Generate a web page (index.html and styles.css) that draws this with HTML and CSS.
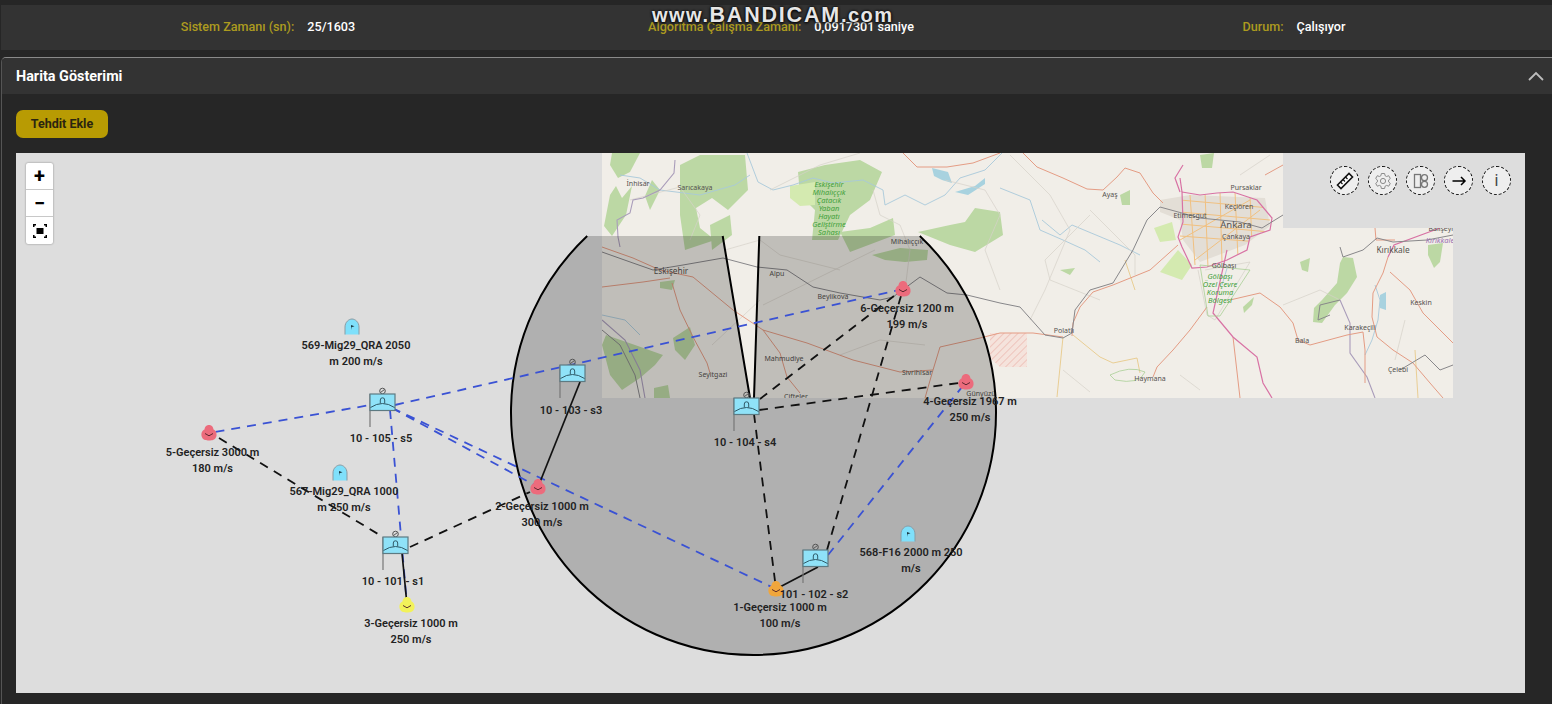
FILE: index.html
```html
<!DOCTYPE html>
<html lang="tr">
<head>
<meta charset="utf-8">
<title>Harita Gösterimi</title>
<link rel="stylesheet" href="styles.css">
</head>
<body>
<div class="watermark"><span class="wm-small">www.</span><span class="wm-big">BANDICAM</span><span class="wm-small">.com</span></div>
<header class="statusbar">
  <div class="stat"><span class="stat-key">Sistem Zamanı (sn):</span><span class="stat-val">25/1603</span></div>
  <div class="stat"><span class="stat-key">Algoritma Çalışma Zamanı:</span><span class="stat-val">0,0917301 saniye</span></div>
  <div class="stat"><span class="stat-key">Durum:</span><span class="stat-val">Çalışıyor</span></div>
</header>
<section class="panel">
  <div class="panel-head">
    <h2 class="panel-title">Harita Gösterimi</h2>
    <svg class="chevron" viewBox="0 0 16 10"><path d="M1 9 L8 2 L15 9"/></svg>
  </div>
  <div class="panel-body">
    <button class="add-btn">Tehdit Ekle</button>
    <div class="map">
      <svg class="canvas" viewBox="16 153 1509 540" xmlns="http://www.w3.org/2000/svg">
        <defs>
          <clipPath id="tiles"><path d="M602 153H1283V228H1453V398H602Z"/></clipPath>
          <clipPath id="ring"><path d="M1182 192L1200 195L1217 193L1233 192L1257 200L1272 218L1270 230L1250 237L1247 250L1227 260L1207 267L1192 268L1182 247L1178 237L1183 222Z"/></clipPath>
          <pattern id="hatch" width="5" height="5" patternUnits="userSpaceOnUse" patternTransform="rotate(-45)">
            <rect width="5" height="5" fill="#f5e3dc"/><rect width="5" height="1" fill="#eec4bc"/>
          </pattern>
          <symbol id="sensor" viewBox="-2 -8 29 43" width="29" height="43" overflow="visible">
            <circle class="s-knob" cx="12.500" cy="-3" r="2.800"/>
            <path class="s-knob" d="M10.500 -1.500 L14.500 -4.500"/>
            <path class="s-pole" d="M0 0V33"/>
            <rect class="s-body" x="0" y="0" width="25" height="16.500"/>
            <path class="s-line" d="M0.500 13.500Q12.500 5.500 24.500 13.500"/>
            <path class="s-line" d="M10.300 9.500V6a2.200 2.200 0 0 1 4.400 0V9.500"/>
          </symbol>
          <symbol id="threat" viewBox="-9 -9 18 18" width="18" height="18" overflow="visible">
            <path d="M-7.500 3C-8 -1 -6 -3 -4.500 -3.500C-4 -7 -2 -8 0 -8C2 -8 4 -7 4.500 -3.500C6 -3 8 -1 7.500 3C6.500 7 3 7.500 0 7.500C-3 7.500 -6.500 7 -7.500 3Z"/>
            <path class="t-mark" d="M-4 0.500L0 2.800L4 0.500"/>
          </symbol>
          <symbol id="qra" viewBox="-9 -9 18 18" width="18" height="18" overflow="visible">
            <path class="q-fill" d="M-7 7.500V0C-7 -5 -3 -8 0 -8C3 -8 7 -5 7 0V7.500Z"/>
            <path class="q-edge" d="M-7 7.500V0C-7 -5 -3 -8 0 -8C3 -8 7 -5 7 0V7.500"/>
            <path class="q-flag" d="M-1 3V-2L2.500 -0.800L-0.500 0.200"/>
          </symbol>
        </defs>

        <g clip-path="url(#tiles)">
          <rect class="tile" x="602" y="153" width="851" height="245"/>
          <g class="forest">
            <path d="M604 226L610 195L616 186L622 198L632 186L626 215L612 236Z"/>
            <path d="M612 153L640 153L630 172L618 178L610 165Z"/>
            <path d="M645 196L652 180L660 190L650 210Z"/>
            <path d="M680 165L700 155L745 155L748 190L728 210L712 198L696 208L700 228L715 240L685 250L680 215Z"/>
            <path d="M710 225L730 215L732 235L712 250Z"/>
            <path d="M798 172L825 165L860 160L882 172L870 200L850 215L838 240L812 240L815 210L800 195Z"/>
            <path d="M840 232L870 228L893 218L895 235L850 252Z"/>
            <path d="M918 232L950 225L965 222L975 208L1000 212L1003 235L975 252L950 245Z"/>
            <path d="M872 255L900 248L928 250L927 260L905 262L885 260Z"/>
            <path d="M606 335L635 345L663 355L655 365L640 378L622 390L610 375L602 345Z"/>
            <path d="M673 338L690 327L695 345L685 360L675 350Z"/>
            <path d="M654 388L668 385L670 398L654 398Z"/>
            <path d="M660 282L675 280L672 290L660 288Z"/>
            <path d="M1343 257L1353 258L1357 277L1347 293L1335 305L1322 323L1313 322L1314 308L1322 300L1337 283L1340 263Z"/>
            <path d="M1243 307L1254 297L1252 305L1244 313Z"/>
            <path d="M1200 155L1214 153L1212 168L1202 168Z"/>
            <path d="M1300 262L1310 258L1308 272L1302 270Z"/>
            <path d="M1428 245L1443 243L1440 262L1434 268L1428 255Z"/>
            <path d="M1120 195L1130 190L1130 205L1122 205Z"/>
            <path d="M1060 270L1075 268L1070 275Z"/>
          </g>
          <path class="forest-light" d="M790 186L815 182L815 205L800 206L790 198Z"/>
          <path class="forest-light" d="M1160 272L1178 250L1192 265L1182 280Z"/>
          <path class="forest-light" d="M1154 228L1172 222L1176 240L1160 242Z"/>
          <path class="urban" d="M1160 200L1190 195L1265 198L1270 226L1245 245L1200 262L1183 240L1180 220L1160 212Z"/>
          <path class="hatch" d="M990 333H1027L1027 367H1000L990 358Z"/>
          <g class="city" clip-path="url(#ring)">
            <path d="M1180 200L1270 208M1180 212L1270 220M1180 224L1270 232M1180 236L1260 242M1190 195L1195 265M1205 192L1208 268M1220 192L1222 262M1235 192L1238 258M1250 195L1252 245M1180 240L1250 200M1195 260L1260 210"/>
          </g>
          <g class="river">
            <path d="M747 153L758 182L773 190L793 185L813 178L833 183L863 180L883 190L885 205L905 195L925 205L945 195L960 178L985 170L1002 153"/>
            <path d="M620 175L640 178L660 190L700 195L735 185L750 175"/>
            <path d="M1000 188L1030 200L1040 230L1063 240L1085 250L1100 262"/>
            <path d="M602 315L625 320L640 335"/>
            <path d="M1042 220L1060 235L1072 225L1120 245L1140 255"/>
            <path d="M1375 285L1380 300L1378 320L1372 340L1365 355"/>
            <path d="M1228 265L1222 285"/>
          </g>
          <path class="lake" d="M932 168L948 172L952 183L942 180L934 176Z"/>
          <path class="lake" d="M955 192L975 186L985 178L985 184L968 195Z"/>
          <path class="lake" d="M1380 295L1386 292L1386 310L1380 308Z"/>
          <g class="minor">
            <path d="M630 200L680 187L700 215L690 240"/>
            <path d="M770 190L820 165L860 153"/>
            <path d="M873 190L880 215L900 225L910 250L905 290"/>
            <path d="M945 180L985 190L1000 215L985 250L1000 290"/>
            <path d="M763 305L830 272L875 250"/>
            <path d="M725 250L760 240L780 255L840 270"/>
            <path d="M1010 155L1050 195L1070 230L1045 290L1030 320"/>
            <path d="M1090 210L1135 255L1135 275"/>
            <path d="M1100 300L1050 280L1045 260L1090 215"/>
            <path d="M1270 155L1240 175"/>
            <path d="M1205 270L1250 262L1215 320L1207 315L1198 270"/>
            <path d="M1283 305L1320 290L1340 300"/>
            <path d="M1405 320L1395 360"/>
            <path d="M1180 375L1200 390M1063 370L1090 392"/>
            <path d="M840 355L880 340L925 345"/>
            <path d="M712 345L760 300"/>
          </g>
          <g class="boundary">
            <path d="M675 160L674 173L660 190L643 198L633 200L630 213L617 220L618 237L620 247"/>
            <path d="M1340 300L1350 323L1350 353L1367 377L1375 398"/>
            <path d="M602 320L625 340L640 370L645 398"/>
          </g>
          <g class="yellow-road">
            <path d="M1063 337L1060 367L1057 397"/>
            <path d="M1073 335L1100 357L1113 363L1137 358L1140 373"/>
            <path d="M1125 260L1135 290"/>
            <path d="M1415 350L1418 398"/>
          </g>
          <g class="red-road">
            <path d="M903 153L917 167L947 167L973 163L1000 153"/>
            <path d="M1023 153L1037 167L1063 178L1087 189L1103 190L1117 177L1125 168L1140 173L1153 193L1163 203"/>
            <path d="M602 247L633 258L660 270L693 277L733 310L763 330L807 343L853 360L900 372L933 370"/>
            <path d="M933 370L940 347L980 338L1000 333L1033 333L1063 337"/>
            <path d="M672 283L680 310L693 337L707 363L710 373"/>
            <path d="M602 287L643 282L670 278"/>
            <path d="M763 330L780 353L787 377L800 393"/>
            <path d="M925 398L933 370"/>
            <path d="M1178 245L1150 270L1113 285L1093 292L1080 307L1073 323L1072 336"/>
            <path d="M1207 307L1190 330L1173 350L1157 367L1153 377"/>
            <path d="M1230 300L1260 293L1280 307L1293 323L1298 340L1310 345L1347 335L1363 332L1365 350L1365 383"/>
            <path d="M1388 257L1383 273L1373 293L1372 317L1377 337L1393 350L1413 363L1430 383L1443 398"/>
            <path d="M1390 272L1410 290L1423 313L1453 343"/>
            <path d="M1233 337L1240 398"/>
            <path d="M1265 175L1283 165"/>
            <path d="M1375 228L1376 240L1395 240"/>
          </g>
          <g class="motorway">
            <path d="M1182 192L1200 195L1217 193L1233 192L1257 200L1272 218L1270 230L1250 237L1247 250L1227 260L1207 267L1192 268L1182 247L1178 237L1183 222Z"/>
            <path d="M1180 178L1182 192M1183 165L1175 178L1180 192"/>
            <path d="M1227 250L1213 313L1233 337L1257 357L1263 383L1272 398"/>
            <path d="M1388 257L1394 245L1440 228"/>
          </g>
          <g class="rail">
            <path d="M602 252L633 263L653 270L683 265L723 258L757 267L787 270L813 287L840 293L880 300L893 297L920 277L947 293L967 295L1000 303L1020 307"/>
            <path d="M1160 207L1147 220L1133 250L1113 283L1090 290L1075 310L1072 333L1063 338L1045 335L1020 307"/>
            <path d="M1160 207L1200 218L1240 222L1262 228L1283 215"/>
            <path d="M1340 247L1343 257L1363 250L1377 238L1393 242L1427 240L1453 235"/>
            <path d="M602 330L620 345L635 375L640 398"/>
            <path d="M1400 370L1425 355L1440 370L1453 365"/>
            <path d="M1340 300L1320 305L1318 320L1330 315"/>
          </g>
          <path class="reserve" d="M1200 265L1250 270L1220 316L1208 316Z"/>
          <path class="reserve" d="M1110 375Q1130 365 1145 372Q1140 385 1115 380Z"/>

          <g class="place">
            <text x="638" y="186">İnhisar</text>
            <text x="695" y="190">Sarıcakaya</text>
            <text x="907" y="244">Mihalıççık</text>
            <text x="671" y="274" class="place-md">Eskişehir</text>
            <text x="777" y="276">Alpu</text>
            <text x="833" y="299">Beylikova</text>
            <text x="784" y="361">Mahmudiye</text>
            <text x="713" y="377">Seyitgazi</text>
            <text x="917" y="375">Sivrihisar</text>
            <text x="796" y="399">Çifteler</text>
            <text x="981" y="396">Günyüzü</text>
            <text x="1110" y="197">Ayaş</text>
            <text x="1246" y="190">Pursaklar</text>
            <text x="1239" y="209">Keçiören</text>
            <text x="1190" y="218">Etimesgut</text>
            <text x="1236" y="228" class="place-lg">Ankara</text>
            <text x="1236" y="239">Çankaya</text>
            <text x="1224" y="268">Gölbaşı</text>
            <text x="1393" y="253" class="place-md">Kırıkkale</text>
            <text x="1442" y="231">Balışeyh</text>
            <text x="1421" y="305">Keskin</text>
            <text x="1360" y="330">Karakeçili</text>
            <text x="1302" y="343">Bala</text>
            <text x="1398" y="372">Çelebi</text>
            <text x="1064" y="333">Polatlı</text>
            <text x="1150" y="381">Haymana</text>
          </g>
          <g class="place-park">
            <text x="829" y="187">Eskişehir</text>
            <text x="829" y="195">Mihalıççık</text>
            <text x="829" y="203">Çatacık</text>
            <text x="829" y="211">Yaban</text>
            <text x="829" y="219">Hayatı</text>
            <text x="829" y="227">Geliştirme</text>
            <text x="829" y="235">Sahası</text>
            <text x="1220" y="279">Gölbaşı</text>
            <text x="1220" y="287">Özel Çevre</text>
            <text x="1220" y="295">Koruma</text>
            <text x="1220" y="303">Bölgesi</text>
          </g>
          <text class="place-purple" x="1440" y="243">Kırıkkale</text>
        </g>

        <path class="cover" d="M753 413L722.700 236H587.200A242.500 242.500 0 1 0 919.800 236H759.300Z"/>
        <path class="cover-edge" d="M587.200 236A242.500 242.500 0 1 0 919.800 236"/>
        <path class="cover-edge" d="M722.700 236L750 398M759.300 236L754 398"/>

        <g class="link-blue">
          <path d="M382 403L209 433"/>
          <path d="M395 405L903 289"/>
          <path d="M392 408L776 589"/>
          <path d="M392 408L538 487"/>
          <path d="M390 410L407 605"/>
          <path d="M828 555L966 382"/>
        </g>
        <g class="link-black">
          <path d="M219 438L383 537"/>
          <path d="M410 547L530 492"/>
          <path d="M760 399L903 289"/>
          <path d="M759 410L966 382"/>
          <path d="M754 414L776 589"/>
          <path d="M827 550L903 289"/>
        </g>
        <g class="link-solid">
          <path d="M580 382L538 487"/>
          <path d="M818 567L776 589"/>
          <path d="M402 553L407 605"/>
        </g>

        <use href="#sensor" x="368" y="386"/>
        <use href="#sensor" x="381" y="529"/>
        <use href="#sensor" x="558" y="357"/>
        <use href="#sensor" x="732" y="390"/>
        <use href="#sensor" x="801" y="542"/>

        <use href="#threat" class="t-red" x="200" y="424"/>
        <use href="#threat" class="t-red" x="529" y="478"/>
        <use href="#threat" class="t-red" x="894" y="280"/>
        <use href="#threat" class="t-red" x="957" y="373"/>
        <use href="#threat" class="t-orange" x="767" y="580"/>
        <use href="#threat" class="t-yellow" x="398" y="596"/>

        <use href="#qra" x="343" y="318"/>
        <use href="#qra" x="331" y="464"/>
        <use href="#qra" x="899" y="525"/>

        <g class="label">
          <text x="356" y="349">569-Mig29_QRA 2050</text>
          <text x="356" y="365">m 200 m/s</text>
          <text x="381" y="442">10 - 105 - s5</text>
          <text x="212.500" y="456">5-Geçersiz 3000 m</text>
          <text x="212.500" y="472">180 m/s</text>
          <text x="344" y="495">567-Mig29_QRA 1000</text>
          <text x="344" y="511">m 250 m/s</text>
          <text x="393" y="585">10 - 101 - s1</text>
          <text x="411" y="627">3-Geçersiz 1000 m</text>
          <text x="411" y="643">250 m/s</text>
          <text x="542" y="510">2-Geçersiz 1000 m</text>
          <text x="542" y="526">300 m/s</text>
          <text x="571" y="414">10 - 103 - s3</text>
          <text x="745" y="446">10 - 104 - s4</text>
          <text x="907" y="312">6-Geçersiz 1200 m</text>
          <text x="907" y="328">199 m/s</text>
          <text x="970" y="405">4-Geçersiz 1967 m</text>
          <text x="970" y="421">250 m/s</text>
          <text x="911" y="556">568-F16 2000 m 250</text>
          <text x="911" y="572">m/s</text>
          <text x="814" y="598">101 - 102 - s2</text>
          <text x="780" y="611">1-Geçersiz 1000 m</text>
          <text x="780" y="627">100 m/s</text>
        </g>
      </svg>

      <div class="zoom-ctl">
        <button class="zoom-btn">+</button>
        <button class="zoom-btn">−</button>
        <button class="zoom-btn">
          <svg class="fit-icon" viewBox="0 0 14 14"><rect x="3.500" y="4" width="7" height="6"/><path d="M0 0h3v1.500h-1.500v1.500h-1.500zM14 0h-3v1.500h1.500v1.500h1.500zM0 14h3v-1.500h-1.500v-1.500h-1.500zM14 14h-3v-1.500h1.500v-1.500h1.500z"/></svg>
        </button>
      </div>

      <div class="tools">
        <div class="tool"><svg class="tool-icon" viewBox="0 0 20 20"><path class="ic-dark" d="M2.500 14L14 2.500L17.500 6L6 17.500Z"/><path class="ic-thin" d="M5.500 11l2 2M8 8.500l2 2M10.500 6l2 2"/></svg></div>
        <div class="tool"><svg class="tool-icon" viewBox="0 0 20 20"><path class="ic-grey" d="M8.400 2.500h3.200l.5 2.200 1.500.8 2.100-.8 1.600 2.800-1.700 1.500v1.900l1.700 1.500-1.600 2.800-2.100-.8-1.500.8-.5 2.300H8.400l-.5-2.300-1.500-.8-2.100.8-1.600-2.800 1.700-1.500V9L2.700 7.500l1.600-2.800 2.100.8 1.500-.8z"/><circle class="ic-grey" cx="10" cy="10" r="2.600"/></svg></div>
        <div class="tool"><svg class="tool-icon" viewBox="0 0 20 20"><rect class="ic-grey2" x="3.500" y="3.500" width="6" height="13"/><circle class="ic-grey2" cx="13.500" cy="6.700" r="3"/><circle class="ic-grey2" cx="13.500" cy="13.300" r="3"/></svg></div>
        <div class="tool"><svg class="tool-icon" viewBox="0 0 20 20"><path class="ic-arrow" d="M3.500 10H16M12 6L16 10L12 14"/></svg></div>
        <div class="tool tool-i">i</div>
      </div>
    </div>
  </div>
</section>
</body>
</html>
```

FILE: styles.css
```css
* { box-sizing: border-box; }
html, body { margin: 0; height: 704px; overflow: hidden; }
body {
  background: #262626;
  padding-top: 5px;
  font-family: Roboto, "Liberation Sans", sans-serif;
  color: #fff;
  position: relative;
}
.watermark {
  position: absolute;
  left: 652px;
  top: 3px;
  height: 24px;
  display: flex;
  align-items: baseline;
  font-family: "Liberation Sans", sans-serif;
  font-weight: 700;
  color: #e6e6e6;
  text-shadow: 0 1px 3px #000, 0 0 3px #000;
  white-space: nowrap;
  z-index: 5;
}
.wm-big { font-size: 21.500px; letter-spacing: 1.800px; }
.wm-small { font-size: 20px; letter-spacing: 1.500px; font-weight: 700; }

.statusbar {
  height: 45px;
  margin: 0 0 7px 1px;
  padding: 0 0 2px 10.500px;
  background: #333;
  display: grid;
  grid-template-columns: repeat(3, 513px);
  align-items: center;
  font-size: 12.600px;
  font-weight: 500;
}
.stat { display: flex; justify-content: center; gap: 13px; }
.stat-key { color: #ad9b1f; }
.stat-val { color: #fff; }

.panel {
  margin-left: 1px;
  height: 647px;
  border-top: 1px solid #8a8a8a;
  border-left: 1px solid #555;
  border-top-left-radius: 5px;
}
.panel-head {
  height: 36px;
  background: #333;
  padding: 0 8px 0 14px;
  display: flex;
  align-items: center;
  justify-content: space-between;
  border-top-left-radius: 4px;
}
.panel-title { margin: 0; font-size: 14.400px; font-weight: 700; color: #fff; }
.chevron { width: 16px; height: 10px; fill: none; stroke: #bdbdbd; stroke-width: 1.800; }
.panel-body { padding: 16px 27px 0 14px; }
.add-btn {
  display: block;
  width: 92px;
  height: 28px;
  padding: 0 0 1px;
  border: 0;
  border-radius: 7px;
  background: #b89b03;
  color: #2b2510;
  font: 700 12.500px Roboto, "Liberation Sans", sans-serif;
}
.map {
  position: relative;
  margin-top: 15px;
  height: 540px;
  background: #dddddd;
  overflow: hidden;
}
.canvas { display: block; width: 100%; height: 100%; }

.tile { fill: #f1eee8; }
.forest path { fill: #bcd8a4; }
.forest-light { fill: #d4eab0; }
.urban { fill: #e3ded6; }
.hatch { fill: url(#hatch); }
.city path { fill: none; stroke: #f0c080; stroke-width: 1; }
.river path { fill: none; stroke: #a8c8da; stroke-width: 0.900; }
.lake { fill: #a8d2df; }
.minor path { fill: none; stroke: #d6d1c8; stroke-width: 0.700; }
.boundary path { fill: none; stroke: #a99cba; stroke-width: 1.100; }
.yellow-road path { fill: none; stroke: #e8c98a; stroke-width: 0.900; }
.red-road path { fill: none; stroke: #e49c84; stroke-width: 1; }
.motorway path { fill: none; stroke: #d872a4; stroke-width: 1.200; }
.rail path { fill: none; stroke: #88878a; stroke-width: 1; }
.reserve { fill: none; stroke: #a9cf96; stroke-width: 0.800; }
.place text {
  font: 7px "Noto Sans", "DejaVu Sans", sans-serif;
  fill: #55524f;
  text-anchor: middle;
}
.place .place-md { font-size: 8.300px; }
.place .place-lg { font-size: 9.500px; }
.place-park text {
  font: italic 7.500px "Noto Sans", "DejaVu Sans", sans-serif;
  fill: #3f9f3a;
  text-anchor: middle;
}
.place-purple { font: italic 7.500px "Noto Sans", sans-serif; fill: #9a6fb0; text-anchor: middle; }

.cover { fill: rgba(0, 0, 0, 0.2); }
.cover-edge { fill: none; stroke: #000; stroke-width: 2; }
.link-blue path { fill: none; stroke: #3a52d4; stroke-width: 1.800; stroke-dasharray: 9 7; }
.link-black path { fill: none; stroke: #111; stroke-width: 1.800; stroke-dasharray: 9 7; }
.link-solid path { fill: none; stroke: #111; stroke-width: 1.700; }

.s-body { fill: #8fe2f8; stroke: #5d7a82; stroke-width: 1.200; }
.s-pole { fill: none; stroke: #777; stroke-width: 1.200; }
.s-line { fill: none; stroke: #2f5a68; stroke-width: 1; }
.s-knob { fill: none; stroke: #555; stroke-width: 1; }
.t-red { fill: #ec6b7c; }
.t-orange { fill: #f0a63c; }
.t-yellow { fill: #f2f25a; }
.t-mark { fill: none; stroke: #502028; stroke-width: 0.900; }
.q-fill { fill: #7fe0fb; }
.q-edge { fill: none; stroke: #8a9ba3; stroke-width: 1; }
.q-flag { fill: #1c3a44; }
.label text {
  font: 600 11px Roboto, "Liberation Sans", sans-serif;
  fill: #222;
  text-anchor: middle;
}

.zoom-ctl {
  position: absolute;
  left: 10px;
  top: 10px;
  width: 27px;
  display: flex;
  flex-direction: column;
  background: #fff;
  border-radius: 2px;
  box-shadow: 0 0 2px rgba(0, 0, 0, 0.45);
}
.zoom-btn {
  height: 27px;
  padding: 0;
  border: 0;
  border-bottom: 1px solid #c8c8c8;
  background: transparent;
  color: #000;
  font: 700 20px/1 Roboto, "Liberation Sans", sans-serif;
  display: flex;
  align-items: center;
  justify-content: center;
}
.zoom-btn:last-child { border-bottom: 0; }
.fit-icon { width: 14px; height: 14px; fill: #000; }

.tools {
  position: absolute;
  top: 13px;
  right: 14px;
  display: flex;
  gap: 9px;
}
.tool {
  width: 29px;
  height: 29px;
  border-radius: 50%;
  border: 1px dashed #111;
  background: #eeeeee;
  display: flex;
  align-items: center;
  justify-content: center;
}
.tool-i { font: 400 16px/1 Roboto, "Liberation Sans", sans-serif; color: #444; }
.tool-icon { width: 20px; height: 20px; }
.ic-dark { fill: #fff; stroke: #111; stroke-width: 1.600; }
.ic-thin { fill: none; stroke: #111; stroke-width: 1.200; }
.ic-grey { fill: none; stroke: #8b8b8b; stroke-width: 1; }
.ic-grey2 { fill: none; stroke: #777; stroke-width: 1.300; }
.ic-arrow { fill: none; stroke: #000; stroke-width: 1.500; }
```
